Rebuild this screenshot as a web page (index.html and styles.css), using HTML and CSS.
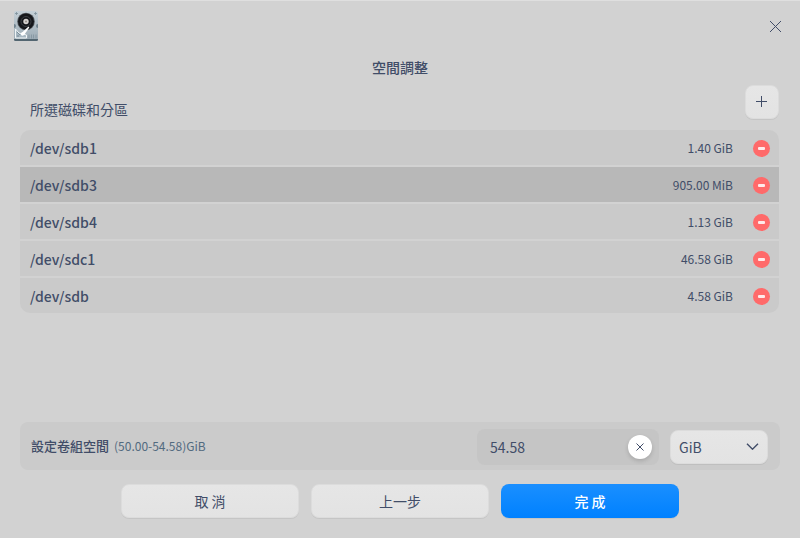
FILE: index.html
```html
<!DOCTYPE html>
<html lang="zh-Hant">
<head>
<meta charset="utf-8">
<title>空間調整</title>
<link rel="stylesheet" href="styles.css">
</head>
<body>
<main class="dialog">
  <header class="titlebar">
    <svg class="app-icon" width="26" height="32" viewBox="0 0 26 32">
      <defs>
        <linearGradient id="metal" x1="0" y1="0" x2="0" y2="1"><stop offset="0" stop-color="#c5d0d7"/><stop offset="1" stop-color="#9baab4"/></linearGradient>
      </defs>
      <rect x="1" y="1" width="24" height="30" rx="2" fill="url(#metal)"/>
      <path d="M1 29h24v.5a1.500 1.500 0 0 1-1.500 1.500H2.500A1.500 1.500 0 0 1 1 29.500z" fill="#536671"/>
      <path d="M3.500 2v3M2 3.500h3M22.500 2v3M21 3.500h3" stroke="#7f909b" stroke-width=".8"/>
      <path d="M1 14a2 2 0 0 1 0 4M25 14a2 2 0 0 0 0 4" fill="#71838e"/>
      <circle cx="13" cy="11.500" r="8.800" fill="#54595e"/>
      <circle cx="13" cy="11.500" r="8" fill="#15171b"/>
      <circle cx="13" cy="11.500" r="5" fill="none" stroke="#44484d" stroke-width=".8"/>
      <circle cx="13" cy="11.500" r="2.700" fill="#d8d4d1"/>
      <circle cx="13" cy="11.500" r="1.100" fill="#9d9792"/>
      <path d="M2.500 19v9h11v-3l-3.500-1-4-1z" fill="#a8b8c2" stroke="#eff4f6" stroke-width="1"/>
      <path d="M8 23.500l7.500-7 .8 1-4.800 7z" fill="#fff"/>
      <circle cx="9.500" cy="24" r="1.700" fill="#fff"/>
      <path d="M4 22l3 3M4 26h2" stroke="#6e818d" stroke-width=".8"/>
      <path d="M16 24.500v4M18.500 24.500v4M20.500 24.500v4M23 24.500v4" stroke="#8899a4" stroke-width="1"/>
    </svg>
    <svg class="close" width="13" height="13" viewBox="0 0 13 13"><path d="M1 1l11 11M12 1L1 12" stroke="#414d68" stroke-width="1"/></svg>
  </header>
  <h1 class="title">空間調整</h1>
  <div class="list-head">
    <h2 class="list-title">所選磁碟和分區</h2>
    <button class="button add" aria-label="新增"><svg width="11" height="11" viewBox="0 0 11 11"><path d="M5.500 0v11M0 5.500h11" stroke="#414d68"/></svg></button>
  </div>
  <ul class="disks">
    <li class="disk"><span class="name">/dev/sdb1</span><span class="size">1.40 GiB</span><i class="remove"></i></li>
    <li class="disk selected"><span class="name">/dev/sdb3</span><span class="size">905.00 MiB</span><i class="remove"></i></li>
    <li class="disk"><span class="name">/dev/sdb4</span><span class="size">1.13 GiB</span><i class="remove"></i></li>
    <li class="disk"><span class="name">/dev/sdc1</span><span class="size">46.58 GiB</span><i class="remove"></i></li>
    <li class="disk"><span class="name">/dev/sdb</span><span class="size">4.58 GiB</span><i class="remove"></i></li>
  </ul>
  <section class="space">
    <span class="space-label">設定卷組空間</span>
    <span class="range">(50.00-54.58)GiB</span>
    <div class="field"><span>54.58</span>
      <span class="clear"><svg width="8" height="8" viewBox="0 0 8 8"><path d="M.5.5l7 7M7.500.5l-7 7" stroke="#414d68" stroke-width="1"/></svg></span>
    </div>
    <div class="button unit"><span>GiB</span><svg width="13" height="7" viewBox="0 0 13 7"><path d="M1 .7L6.500 6.200 12 .7" fill="none" stroke="#414d68" stroke-width="1.400"/></svg></div>
  </section>
  <footer class="actions">
    <button class="button action">取 消</button>
    <button class="button action">上一步</button>
    <button class="button action primary">完 成</button>
  </footer>
</main>
</body>
</html>
```
FILE: styles.css
```css
* { box-sizing: border-box; }
body {
  margin: 0;
  background: #d2d2d2;
  color: #414d68;
  font: 14px/20px "Noto Sans CJK TC", "Noto Sans CJK SC", sans-serif;
}
.dialog {
  display: flex;
  flex-direction: column;
  height: 538px;
  padding: 0 20px 20px;
  border-top: 1px solid #dfdfdf;
}
.titlebar {
  display: flex;
  justify-content: space-between;
  height: 49px;
  margin: 0 -2px 0 -7px;
  padding-top: 9px;
}
.close { margin-top: 10px; }
.title {
  margin: 7px 0 0;
  font-size: 14px;
  font-weight: 500;
  text-align: center;
}
.list-head {
  display: flex;
  justify-content: space-between;
  height: 34px;
  margin: 8px 1px 0 10px;
}
.list-title {
  margin: 14px 0 0;
  font-size: 14px;
  font-weight: 400;
}
.button {
  border: 1px solid #dcdcdc;
  border-radius: 8px;
  background: linear-gradient(#e6e6e6, #e3e3e3);
  box-shadow: 0 1px 0 rgba(0, 0, 0, .06);
  color: inherit;
  font: inherit;
}
.add {
  display: grid;
  place-items: center;
  width: 34px;
  height: 34px;
  padding: 0 1px 1px 0;
}
.disks {
  display: flex;
  flex-direction: column;
  gap: 2px;
  width: 759px;
  margin: 11px 0 0;
  padding: 0;
  overflow: hidden;
  border-radius: 10px;
  list-style: none;
}
.disk {
  display: flex;
  align-items: center;
  height: 35px;
  padding: 1px 9px 0 10px;
  background: #cacaca;
}
.selected { background: #b8b8b8; }
.name {
  flex: 1;
  font-weight: 500;
}
.size { font-size: 12px; }
.remove {
  display: grid;
  place-items: center;
  width: 17px;
  height: 17px;
  margin-left: 20px;
  border-radius: 50%;
  background: #ff6a6a;
}
.remove::before {
  content: "";
  width: 7px;
  height: 3px;
  border-radius: 1px;
  background: #ffeaea;
}
.space {
  display: flex;
  align-items: center;
  height: 48px;
  margin-top: auto;
  padding: 0 12px 0 11px;
  border-radius: 8px;
  background: #cbcbcb;
}
.space-label {
  font-size: 13px;
  font-weight: 500;
}
.range {
  margin-left: 5px;
  color: #526a7f;
  font-size: 12px;
}
.field {
  display: flex;
  align-items: center;
  justify-content: space-between;
  width: 182px;
  height: 36px;
  margin: 2px 0 0 auto;
  padding: 0 7px 0 13px;
  border-radius: 8px;
  background: #c5c5c5;
}
.clear {
  display: grid;
  place-items: center;
  width: 24px;
  height: 24px;
  border-radius: 50%;
  background: #fff;
  box-shadow: 0 2px 4px rgba(0, 0, 0, .15);
}
.unit {
  display: flex;
  align-items: center;
  justify-content: space-between;
  width: 98px;
  height: 34px;
  margin: 2px 0 0 11px;
  padding: 0 8px;
}
.unit svg { margin-bottom: 1px; }
.actions {
  display: flex;
  justify-content: center;
  gap: 12px;
  margin-top: 14px;
}
.action {
  width: 178px;
  height: 34px;
  padding: 0 0 1px;
}
.primary {
  border: 0;
  background: linear-gradient(#1a8fff, #0081ff);
  color: #fff;
  font-weight: 500;
}
```
